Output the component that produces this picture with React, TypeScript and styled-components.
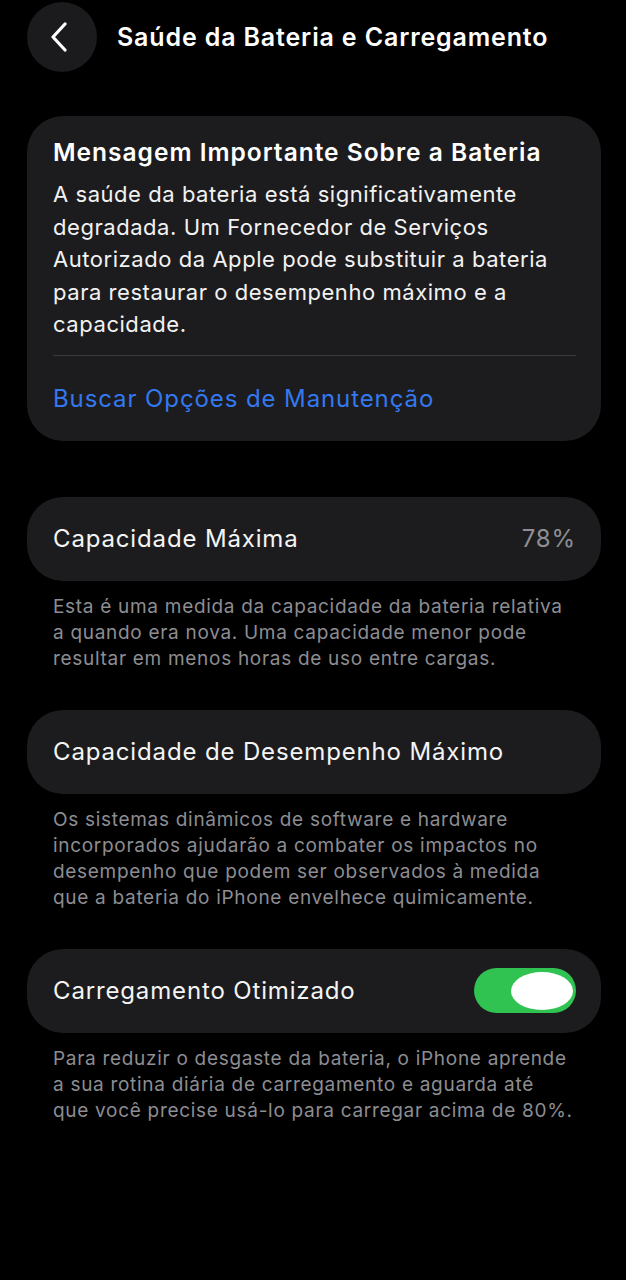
import styled, {createGlobalStyle} from "styled-components"

const GlobalStyle = createGlobalStyle`
    html, body {
        margin: 0;
        padding: 0;
        background: #000;
    }
    body {
        font-family: Inter, "Liberation Sans", sans-serif;
        color: #fff;
        -webkit-font-smoothing: antialiased;
    }
`

const Page = styled.div`
    width: 626px;
    min-height: 1280px;
    background: #000;
    display: flex;
    flex-direction: column;
    padding: 2px 25px 0 27px;
    box-sizing: border-box;
`

const Header = styled.div`
    height: 70px;
    display: flex;
    flex-direction: row;
    align-items: center;
    gap: 20px;
`

const BackButton = styled.div`
    width: 70px;
    height: 70px;
    border-radius: 50%;
    background: #1b1b1d;
    display: flex;
    align-items: center;
    justify-content: center;
    svg {
        margin-right: 6px;
    }
`

const Title = styled.div`
    font-size: 25px;
    font-weight: 600;
    letter-spacing: 0.85px;
    color: #fff;
`

const Card = styled.div<{$mt: number}>`
    margin-top: ${p => p.$mt}px;
    background: #1c1c1e;
    border-radius: 36px;
    display: flex;
    flex-direction: column;
`

const CardBody = styled.div`
    padding: 20px 26px 14px;
    display: flex;
    flex-direction: column;
    gap: 10px;
`

const CardTitle = styled.div`
    font-size: 24.5px;
    font-weight: 600;
    line-height: 32px;
    letter-spacing: 1px;
`

const CardText = styled.div`
    font-size: 22px;
    line-height: 32.5px;
    letter-spacing: 0.55px;
    color: #f2f2f2;
    white-space: nowrap;
`

const Divider = styled.div`
    height: 1px;
    background: #3a3a3c;
    margin: 0 25px 0 26px;
`

const LinkRow = styled.div`
    height: 85px;
    padding: 0 26px;
    display: flex;
    align-items: center;
    font-size: 24px;
    letter-spacing: 0.9px;
    color: #3478f0;
`

const Row = styled.div`
    height: 84px;
    padding: 0 25px 0 26px;
    display: flex;
    flex-direction: row;
    align-items: center;
    justify-content: space-between;
    font-size: 24px;
    letter-spacing: 0.85px;
    color: #f4f4f4;
`

const RowValue = styled.span`
    color: #8e8e93;
`

const Footnote = styled.div`
    margin-top: 13px;
    padding-left: 26px;
    font-size: 19px;
    line-height: 26px;
    letter-spacing: 0.7px;
    color: #8d8d92;
    white-space: nowrap;
`

const Toggle = styled.div<{$on: boolean}>`
    width: 102px;
    height: 45px;
    border-radius: 23px;
    background: ${p => p.$on ? "#30c352" : "#39393d"};
    display: flex;
    align-items: center;
    justify-content: ${p => p.$on ? "flex-end" : "flex-start"};
    padding: 0 3px;
    box-sizing: border-box;
`

const Knob = styled.div`
    width: 62px;
    height: 38px;
    border-radius: 50%;
    background: #fff;
`

export default function App(){
    return (
        <>
            <GlobalStyle />
            <Page>
                <Header>
                    <BackButton>
                        <svg width="18" height="30" viewBox="0 0 18 30">
                            <path d="M15 2 L3 15 L15 28" fill="none" stroke="#fff" strokeWidth="3.2" strokeLinecap="round" strokeLinejoin="round" />
                        </svg>
                    </BackButton>
                    <Title>Saúde da Bateria e Carregamento</Title>
                </Header>

                <Card $mt={44}>
                    <CardBody>
                        <CardTitle>Mensagem Importante Sobre a Bateria</CardTitle>
                        <CardText>
                            A saúde da bateria está significativamente<br />
                            degradada. Um Fornecedor de Serviços<br />
                            Autorizado da Apple pode substituir a bateria<br />
                            para restaurar o desempenho máximo e a<br />
                            capacidade.
                        </CardText>
                    </CardBody>
                    <Divider />
                    <LinkRow>Buscar Opções de Manutenção</LinkRow>
                </Card>

                <Card $mt={56}>
                    <Row>
                        <span>Capacidade Máxima</span>
                        <RowValue>78%</RowValue>
                    </Row>
                </Card>
                <Footnote>
                    Esta é uma medida da capacidade da bateria relativa<br />
                    a quando era nova. Uma capacidade menor pode<br />
                    resultar em menos horas de uso entre cargas.
                </Footnote>

                <Card $mt={38}>
                    <Row>
                        <span>Capacidade de Desempenho Máximo</span>
                    </Row>
                </Card>
                <Footnote>
                    Os sistemas dinâmicos de software e hardware<br />
                    incorporados ajudarão a combater os impactos no<br />
                    desempenho que podem ser observados à medida<br />
                    que a bateria do iPhone envelhece quimicamente.
                </Footnote>

                <Card $mt={38}>
                    <Row>
                        <span>Carregamento Otimizado</span>
                        <Toggle $on={true}>
                            <Knob />
                        </Toggle>
                    </Row>
                </Card>
                <Footnote>
                    Para reduzir o desgaste da bateria, o iPhone aprende<br />
                    a sua rotina diária de carregamento e aguarda até<br />
                    que você precise usá-lo para carregar acima de 80%.
                </Footnote>
            </Page>
        </>
    )
}
